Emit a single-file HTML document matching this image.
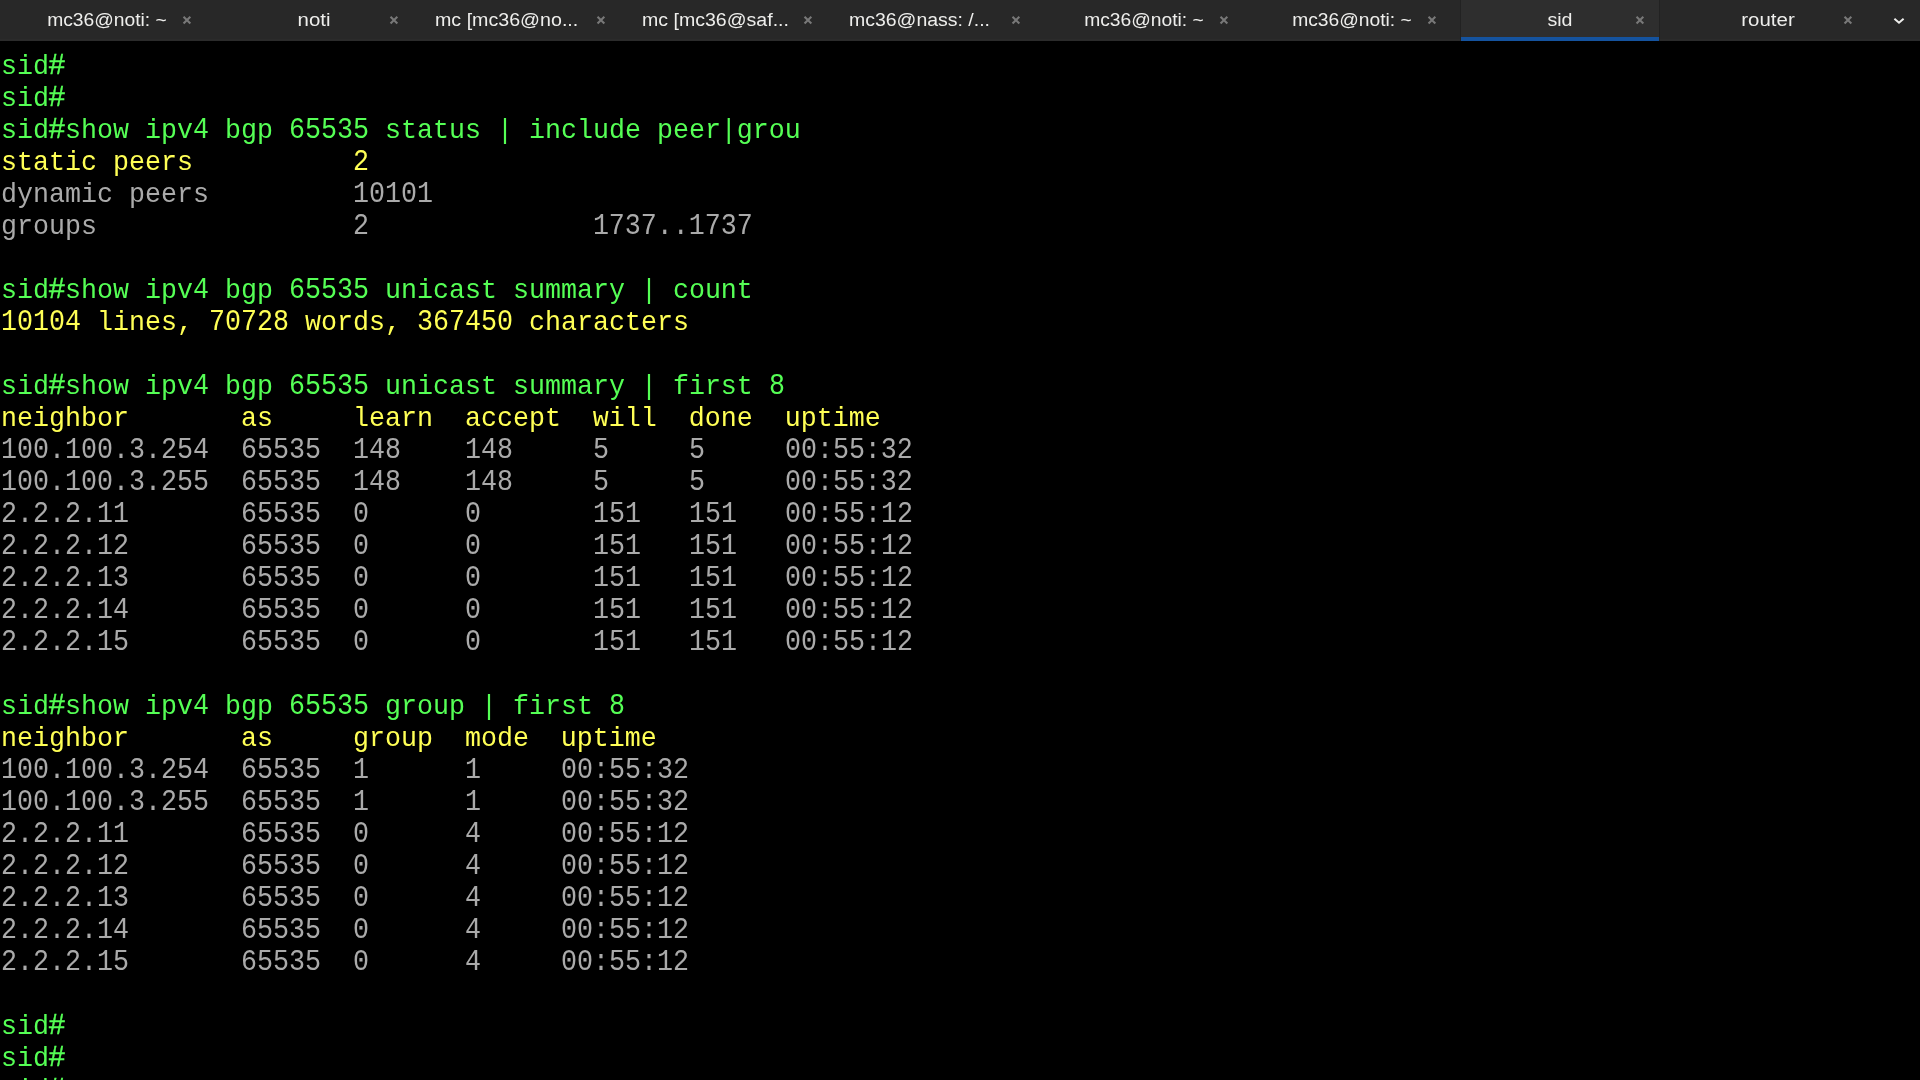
<!DOCTYPE html>
<html><head><meta charset="utf-8"><title>sid</title>
<style>
html,body{margin:0;padding:0;background:#000;}
body{width:1920px;height:1080px;overflow:hidden;position:relative;font-family:"Liberation Sans",sans-serif;}
#bar{position:absolute;left:0;top:0;width:1920px;height:41px;background:#282828;}
#bar .bl{position:absolute;left:0;top:39px;width:1920px;height:2px;background:#2b2b2b;}
.tab{position:absolute;top:0;height:41px;width:198px;}
.tab.act{background:#2e2e2e;border-left:1px solid #222;border-right:1px solid #222;box-sizing:content-box;margin-left:-1px;}
.tab.act .ul{position:absolute;left:0;top:37px;width:198px;height:4px;background:#15539e;}
.tab .lb{position:absolute;top:10px;left:0;width:198px;text-align:center;color:#eeeeec;font-size:18px;line-height:20px;white-space:nowrap;letter-spacing:0px;}
.tab .lb.l{text-align:left;}
.tab svg.x{position:absolute;left:173px;top:14px;}
#chev{position:absolute;left:1893px;top:16px;}
#wrap{position:absolute;left:0;top:0;width:1920px;height:1080px;will-change:transform;}
#term{position:absolute;left:0;top:41px;width:1920px;height:1039px;overflow:hidden;}
.ln{position:absolute;left:1px;height:32px;line-height:32px;white-space:pre;font-family:"Liberation Mono",monospace;font-size:26.67px;letter-spacing:0px;transform-origin:0 23px;transform:scale(1,1.06);}
.d{display:inline-block;transform-origin:0 23px;transform:scale(1,1.075);}
.h{display:inline-block;transform-origin:50% 23px;transform:scale(1.08,1.07);-webkit-text-stroke:0.4px #55ff55;}
.g{color:#55ff55}.y{color:#ffff55}.w{color:#aaaaaa}
</style></head><body><div id="wrap">
<div id="bar"><div class="bl"></div>
<div class="tab" style="left:8px"><div class="lb" style="width:198px;transform:scaleX(1.07)">mc36@noti: ~</div><svg class="x" width="12" height="12" viewBox="0 0 12 12"><path d="M2.53 2.65 L9.33 9.45 M9.33 2.65 L2.53 9.45" stroke="#787878" stroke-width="2.1" fill="none"/></svg></div>
<div class="tab" style="left:215px"><div class="lb" style="width:198px;transform:scaleX(1.134)">noti</div><svg class="x" width="12" height="12" viewBox="0 0 12 12"><path d="M2.53 2.65 L9.33 9.45 M9.33 2.65 L2.53 9.45" stroke="#787878" stroke-width="2.1" fill="none"/></svg></div>
<div class="tab" style="left:422px"><div class="lb l" style="left:12.5px;transform-origin:0 50%;transform:scaleX(1.091)">mc [mc36@no...</div><svg class="x" width="12" height="12" viewBox="0 0 12 12"><path d="M2.53 2.65 L9.33 9.45 M9.33 2.65 L2.53 9.45" stroke="#787878" stroke-width="2.1" fill="none"/></svg></div>
<div class="tab" style="left:629px"><div class="lb l" style="left:12.5px;transform-origin:0 50%;transform:scaleX(1.086)">mc [mc36@saf...</div><svg class="x" width="12" height="12" viewBox="0 0 12 12"><path d="M2.53 2.65 L9.33 9.45 M9.33 2.65 L2.53 9.45" stroke="#787878" stroke-width="2.1" fill="none"/></svg></div>
<div class="tab" style="left:837px"><div class="lb l" style="left:11.5px;transform-origin:0 50%;transform:scaleX(1.082)">mc36@nass: /...</div><svg class="x" width="12" height="12" viewBox="0 0 12 12"><path d="M2.53 2.65 L9.33 9.45 M9.33 2.65 L2.53 9.45" stroke="#787878" stroke-width="2.1" fill="none"/></svg></div>
<div class="tab" style="left:1045px"><div class="lb" style="width:198px;transform:scaleX(1.07)">mc36@noti: ~</div><svg class="x" width="12" height="12" viewBox="0 0 12 12"><path d="M2.53 2.65 L9.33 9.45 M9.33 2.65 L2.53 9.45" stroke="#787878" stroke-width="2.1" fill="none"/></svg></div>
<div class="tab" style="left:1253px"><div class="lb" style="width:198px;transform:scaleX(1.07)">mc36@noti: ~</div><svg class="x" width="12" height="12" viewBox="0 0 12 12"><path d="M2.53 2.65 L9.33 9.45 M9.33 2.65 L2.53 9.45" stroke="#787878" stroke-width="2.1" fill="none"/></svg></div>
<div class="tab act" style="left:1461px"><div class="lb" style="width:198px;transform:scaleX(1.09)">sid</div><svg class="x" width="12" height="12" viewBox="0 0 12 12"><path d="M2.53 2.65 L9.33 9.45 M9.33 2.65 L2.53 9.45" stroke="#787878" stroke-width="2.1" fill="none"/></svg><div class="ul"></div></div>
<div class="tab" style="left:1669px"><div class="lb" style="width:198px;transform:scaleX(1.135)">router</div><svg class="x" width="12" height="12" viewBox="0 0 12 12"><path d="M2.53 2.65 L9.33 9.45 M9.33 2.65 L2.53 9.45" stroke="#787878" stroke-width="2.1" fill="none"/></svg></div>
<svg id="chev" width="12" height="9" viewBox="0 0 12 9"><path d="M1.4 2.7 L6 6.7 L10.6 2.7" stroke="#eeeeec" stroke-width="2" fill="none"/></svg>
</div>
<div id="term">
<div class="ln g" style="top:10px">sid<span class="h">#</span></div>
<div class="ln g" style="top:42px">sid<span class="h">#</span></div>
<div class="ln g" style="top:74px">sid<span class="h">#</span>show ipv<span class="d">4</span> bgp <span class="d">65535</span> status | include peer|grou</div>
<div class="ln y" style="top:106px">static peers          <span class="d">2</span></div>
<div class="ln w" style="top:138px">dynamic peers         <span class="d">10101</span></div>
<div class="ln w" style="top:170px">groups                <span class="d">2</span>              <span class="d">1737..1737</span></div>
<div class="ln g" style="top:234px">sid<span class="h">#</span>show ipv<span class="d">4</span> bgp <span class="d">65535</span> unicast summary | count</div>
<div class="ln y" style="top:266px"><span class="d">10104</span> lines, <span class="d">70728</span> words, <span class="d">367450</span> characters</div>
<div class="ln g" style="top:330px">sid<span class="h">#</span>show ipv<span class="d">4</span> bgp <span class="d">65535</span> unicast summary | first <span class="d">8</span></div>
<div class="ln y" style="top:362px">neighbor       as     learn  accept  will  done  uptime</div>
<div class="ln w" style="top:394px"><span class="d">100.100.3.254</span>  <span class="d">65535</span>  <span class="d">148</span>    <span class="d">148</span>     <span class="d">5</span>     <span class="d">5</span>     <span class="d">00:55:32</span></div>
<div class="ln w" style="top:426px"><span class="d">100.100.3.255</span>  <span class="d">65535</span>  <span class="d">148</span>    <span class="d">148</span>     <span class="d">5</span>     <span class="d">5</span>     <span class="d">00:55:32</span></div>
<div class="ln w" style="top:458px"><span class="d">2.2.2.11</span>       <span class="d">65535</span>  <span class="d">0</span>      <span class="d">0</span>       <span class="d">151</span>   <span class="d">151</span>   <span class="d">00:55:12</span></div>
<div class="ln w" style="top:490px"><span class="d">2.2.2.12</span>       <span class="d">65535</span>  <span class="d">0</span>      <span class="d">0</span>       <span class="d">151</span>   <span class="d">151</span>   <span class="d">00:55:12</span></div>
<div class="ln w" style="top:522px"><span class="d">2.2.2.13</span>       <span class="d">65535</span>  <span class="d">0</span>      <span class="d">0</span>       <span class="d">151</span>   <span class="d">151</span>   <span class="d">00:55:12</span></div>
<div class="ln w" style="top:554px"><span class="d">2.2.2.14</span>       <span class="d">65535</span>  <span class="d">0</span>      <span class="d">0</span>       <span class="d">151</span>   <span class="d">151</span>   <span class="d">00:55:12</span></div>
<div class="ln w" style="top:586px"><span class="d">2.2.2.15</span>       <span class="d">65535</span>  <span class="d">0</span>      <span class="d">0</span>       <span class="d">151</span>   <span class="d">151</span>   <span class="d">00:55:12</span></div>
<div class="ln g" style="top:650px">sid<span class="h">#</span>show ipv<span class="d">4</span> bgp <span class="d">65535</span> group | first <span class="d">8</span></div>
<div class="ln y" style="top:682px">neighbor       as     group  mode  uptime</div>
<div class="ln w" style="top:714px"><span class="d">100.100.3.254</span>  <span class="d">65535</span>  <span class="d">1</span>      <span class="d">1</span>     <span class="d">00:55:32</span></div>
<div class="ln w" style="top:746px"><span class="d">100.100.3.255</span>  <span class="d">65535</span>  <span class="d">1</span>      <span class="d">1</span>     <span class="d">00:55:32</span></div>
<div class="ln w" style="top:778px"><span class="d">2.2.2.11</span>       <span class="d">65535</span>  <span class="d">0</span>      <span class="d">4</span>     <span class="d">00:55:12</span></div>
<div class="ln w" style="top:810px"><span class="d">2.2.2.12</span>       <span class="d">65535</span>  <span class="d">0</span>      <span class="d">4</span>     <span class="d">00:55:12</span></div>
<div class="ln w" style="top:842px"><span class="d">2.2.2.13</span>       <span class="d">65535</span>  <span class="d">0</span>      <span class="d">4</span>     <span class="d">00:55:12</span></div>
<div class="ln w" style="top:874px"><span class="d">2.2.2.14</span>       <span class="d">65535</span>  <span class="d">0</span>      <span class="d">4</span>     <span class="d">00:55:12</span></div>
<div class="ln w" style="top:906px"><span class="d">2.2.2.15</span>       <span class="d">65535</span>  <span class="d">0</span>      <span class="d">4</span>     <span class="d">00:55:12</span></div>
<div class="ln g" style="top:970px">sid<span class="h">#</span></div>
<div class="ln g" style="top:1002px">sid<span class="h">#</span></div>
<div class="ln g" style="top:1034px">sid<span class="h">#</span></div>
</div>
</div>
</body></html>
